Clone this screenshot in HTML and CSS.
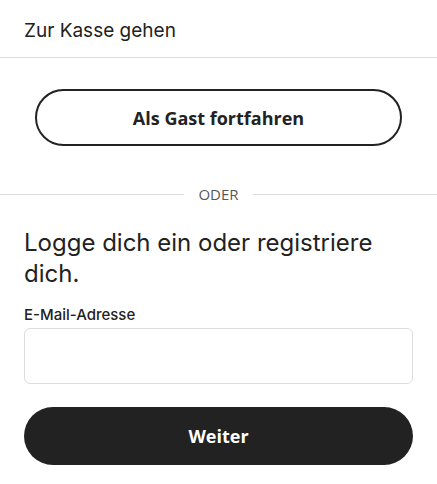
FILE: index.html
```html
<!DOCTYPE html>
<html lang="de">
<head>
  <meta charset="UTF-8">
  <meta name="viewport" content="width=device-width, initial-scale=1.0">
  <title>Zur Kasse gehen</title>
  <link rel="stylesheet" href="styles.css">
</head>
<body>

  <header class="checkout-header">
    <h1>Zur Kasse gehen</h1>
  </header>

  <div class="guest">
    <button type="button" class="btn-outline">Als Gast fortfahren</button>
  </div>

  <div class="divider"><span>ODER</span></div>

  <form class="signin" onsubmit="return false">
    <h2>Logge dich ein oder registriere dich.</h2>

    <label for="email">E-Mail-Adresse</label>
    <input type="email" id="email">

    <button type="submit" class="btn-dark">Weiter</button>
  </form>

</body>
</html>
```

FILE: styles.css
```css
body {
  font-family: 'Inter', 'Roboto', sans-serif;
  margin: 0;
  padding: 0;
  background: #fff;
  color: #222;
}

.checkout-header {
  height: 58px;
  padding: 4px 24px 0;
  box-sizing: border-box;
  display: flex;
  align-items: center;
  border-bottom: 1px solid #ddd;
}

.checkout-header h1 {
  margin: 0;
  font-size: 19px;
  font-weight: 400;
}

.guest {
  padding: 31px 35px 0;
}

button {
  width: 100%;
  height: 57px;
  border-radius: 30px;
  font-family: 'Open Sans', sans-serif;
  font-size: 18px;
  font-weight: 700;
  cursor: pointer;
}

.btn-outline {
  background: #fff;
  border: 2px solid #222;
  color: #222;
}

.divider {
  display: flex;
  align-items: center;
  gap: 14px;
  margin-top: 38px;
  font-family: 'Open Sans', sans-serif;
  font-size: 15px;
  color: #595959;
}

.divider::before,
.divider::after {
  content: '';
  flex: 1;
  border-top: 1px solid #ddd;
}

.signin {
  padding: 0 24px;
}

.signin h2 {
  margin: 23px 0 16px;
  font-size: 24px;
  line-height: 31px;
  font-weight: 400;
}

label {
  display: block;
  font-size: 15px;
  font-weight: 500;
  margin-bottom: 4px;
}

input {
  display: block;
  width: 100%;
  height: 56px;
  box-sizing: border-box;
  border: 1px solid #ddd;
  border-radius: 6px;
  padding: 0 12px;
  font-size: 16px;
}

.btn-dark {
  margin-top: 23px;
  height: 58px;
  background: #222;
  border: none;
  color: #fff;
}
```
